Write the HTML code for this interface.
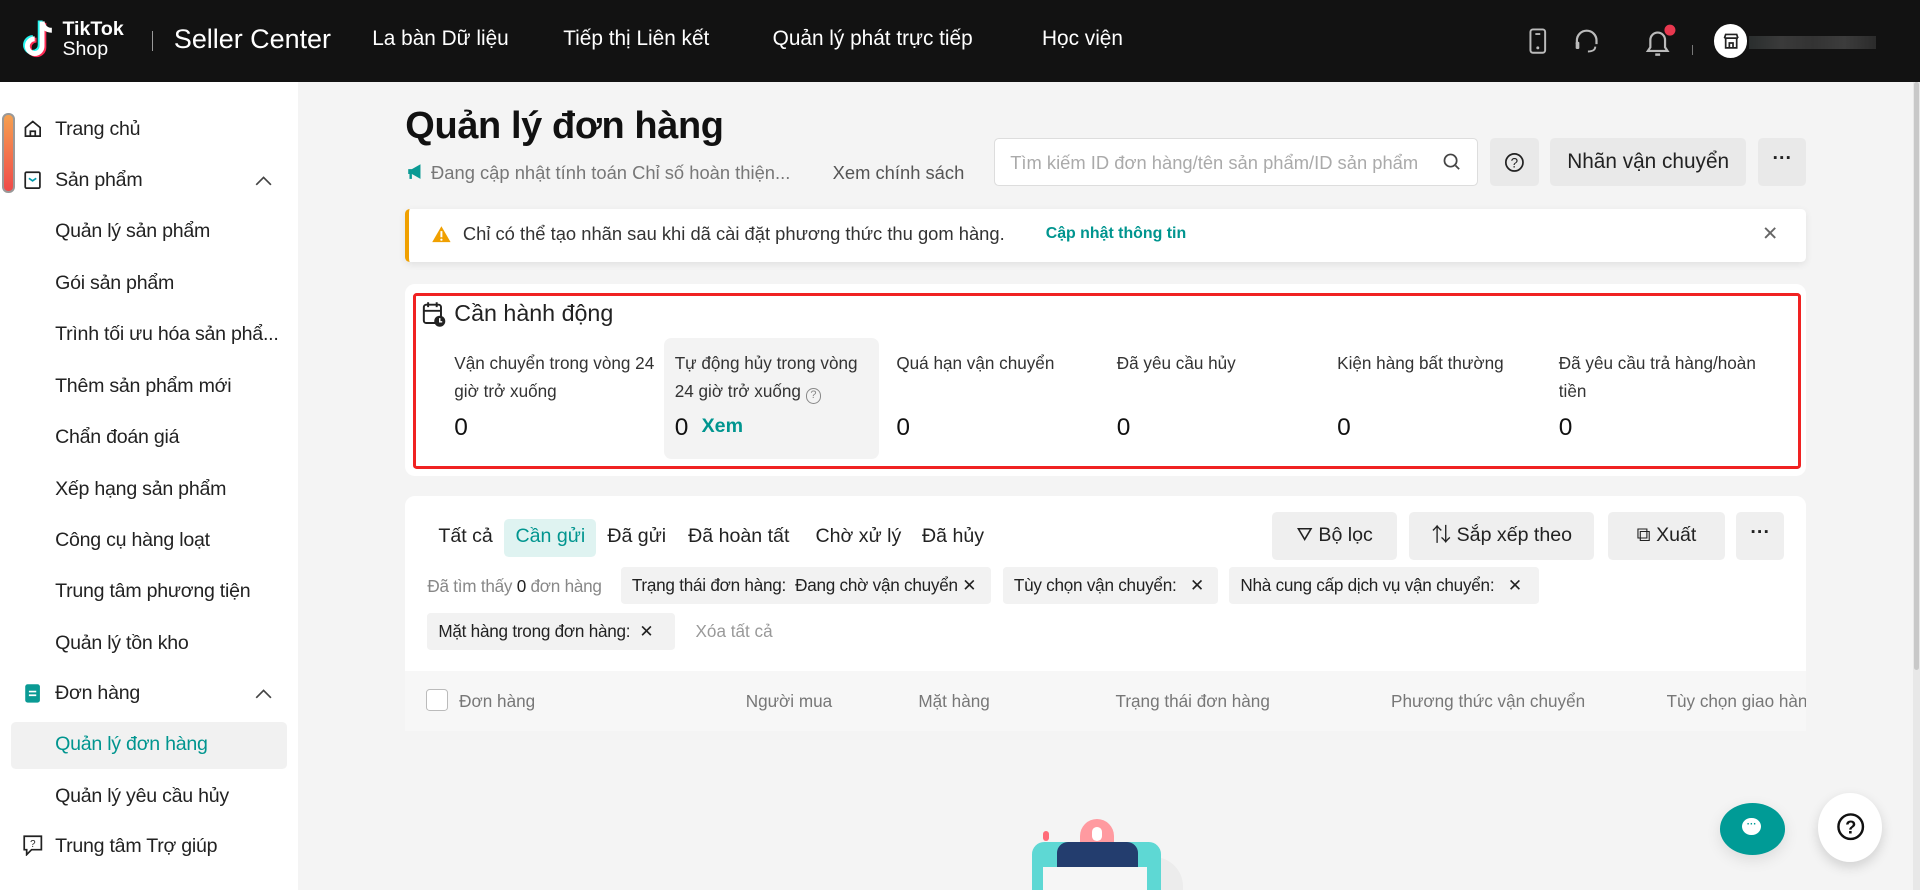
<!DOCTYPE html>
<html><head><meta charset="utf-8">
<style>
html,body{margin:0;padding:0;width:1920px;height:890px;overflow:hidden;background:#f4f4f4}
#w{zoom:1.22449;width:1568px;height:727px;position:relative;font-family:"Liberation Sans","Noto Sans CJK SC",sans-serif;color:#222;overflow:hidden;background:#f4f4f4}
.a{position:absolute;white-space:nowrap}
.hd{position:absolute;left:0;top:0;width:1568px;height:67px;background:#121212}
.nav{color:#fff;font-size:17px;top:22px}
.sb{position:absolute;left:0;top:67px;width:243px;height:660px;background:#fff}
.si{font-size:16px;color:#222;letter-spacing:-0.2px}
.btn{position:absolute;background:#e9e9e9;border-radius:4px;font-size:16px;color:#222;text-align:center;white-space:nowrap}
.card{position:absolute;background:#fff;border-radius:8px}
.lbl{font-size:14px;line-height:23px;color:#333;white-space:normal;width:170px}
.num{font-size:20px;color:#111}
.chip{position:absolute;white-space:nowrap;background:#f2f2f2;border-radius:3px;height:30px;line-height:30px;font-size:14px;color:#222;padding:0 9px;box-sizing:border-box;letter-spacing:-0.2px;overflow:hidden}
.th{font-size:14px;color:#777;top:564px}
.tab{font-size:16px;top:429px}
</style></head><body><div id="w">
<div class="hd"></div>
<svg class="a" style="left:16px;top:15px" width="34" height="36" viewBox="0 0 34 36">
<path d="M18 3v20a6 6 0 1 1-6-6" fill="none" stroke="#25f4ee" stroke-width="4" transform="translate(-1.5,-1)"/>
<path d="M18 3v20a6 6 0 1 1-6-6" fill="none" stroke="#fe2c55" stroke-width="4" transform="translate(1.5,1)"/>
<path d="M18 3v20a6 6 0 1 1-6-6M18 3c1 5 4 7 8 7" fill="none" stroke="#fff" stroke-width="4"/>
</svg>
<div class="a" style="left:51px;top:16px;color:#fff;font-size:16px;font-weight:bold;line-height:16px">TikTok</div>
<div class="a" style="left:51px;top:33px;color:#fff;font-size:16px;line-height:16px">Shop</div>
<div class="a" style="left:124px;top:25px;width:1px;height:17px;background:#999"></div>
<div class="a" style="left:142px;top:20px;color:#fff;font-size:22px">Seller Center</div>
<div class="a nav" style="left:304px">La bàn Dữ liệu</div>
<div class="a nav" style="left:460px">Tiếp thị Liên kết</div>
<div class="a nav" style="left:631px">Quản lý phát trực tiếp</div>
<div class="a nav" style="left:851px">Học viện</div>
<svg class="a" style="left:1248px;top:22px" width="16" height="24"><rect x="2" y="2" width="12" height="19" rx="2" fill="none" stroke="#bbb" stroke-width="1.6"/><rect x="6" y="5" width="4" height="1.5" fill="#bbb"/><circle cx="8" cy="17" r="1.2" fill="#bbb"/></svg>
<svg class="a" style="left:1284px;top:22px" width="24" height="24"><path d="M4 14v-3a8 8 0 0 1 16 0v3" fill="none" stroke="#bbb" stroke-width="1.8"/><rect x="3" y="12" width="3" height="6" rx="1" fill="#bbb"/><path d="M19 16c0 3-3 4-6 4" fill="none" stroke="#bbb" stroke-width="1.6"/></svg>
<svg class="a" style="left:1342px;top:20px" width="30" height="28"><path d="M4 22h16l-2-3v-6a6 6 0 0 0-12 0v6z" fill="none" stroke="#bbb" stroke-width="1.8"/><path d="M10 25h4" stroke="#bbb" stroke-width="2"/><circle cx="22" cy="5" r="4.5" fill="#e8384f"/></svg>
<div class="a" style="left:1382px;top:37px;width:1px;height:8px;background:#777"></div>
<div class="a" style="left:1400px;top:20px;width:27px;height:27px;border-radius:50%;background:#fff"></div>
<svg class="a" style="left:1406px;top:26px" width="15" height="15"><path d="M2 5h11M3 5v8h9V5M2 5l1-3h9l1 3M6 13V9h3v4" fill="none" stroke="#222" stroke-width="1.4"/></svg>
<div class="a" style="left:1428px;top:29px;width:104px;height:11px;background:linear-gradient(90deg,#2a2e2e,#3a3a3a,#333,#3c3c3c,#2b2b2b)"></div>
<div class="sb"></div>
<div class="a" style="left:2px;top:92px;width:7px;height:62px;border:2px solid #999;border-radius:5px;background:linear-gradient(#f5a050,#f04a4a)"></div>
<svg class="a" style="left:19px;top:97px" width="16" height="16"><path d="M2 7l6-5 6 5v7H2z M6 14v-4h4v4" fill="none" stroke="#222" stroke-width="1.4"/></svg>
<div class="a si" style="left:45px;top:96px">Trang chủ</div>
<svg class="a" style="left:20px;top:140px" width="14" height="15"><rect x="1" y="1" width="12" height="13" rx="1" fill="none" stroke="#222" stroke-width="1.4"/><path d="M4 6l3 2 3-2" fill="none" stroke="#09a" stroke-width="1.4"/></svg>
<div class="a si" style="left:45px;top:138px">Sản phẩm</div>
<svg class="a" style="left:208px;top:143px" width="14" height="9"><path d="M1 8l6-6 6 6" fill="none" stroke="#444" stroke-width="1.4"/></svg>
<div class="a si" style="left:45px;top:180px">Quản lý sản phẩm</div>
<div class="a si" style="left:45px;top:222px">Gói sản phẩm</div>
<div class="a si" style="left:45px;top:264px">Trình tối ưu hóa sản phẩ...</div>
<div class="a si" style="left:45px;top:306px">Thêm sản phẩm mới</div>
<div class="a si" style="left:45px;top:348px">Chẩn đoán giá</div>
<div class="a si" style="left:45px;top:390px">Xếp hạng sản phẩm</div>
<div class="a si" style="left:45px;top:432px">Công cụ hàng loạt</div>
<div class="a si" style="left:45px;top:474px">Trung tâm phương tiện</div>
<div class="a si" style="left:45px;top:516px">Quản lý tồn kho</div>
<svg class="a" style="left:20px;top:558px" width="14" height="17"><rect x="1" y="1" width="12" height="15" rx="2" fill="#0a9a94"/><path d="M4 7h6M4 10h6" stroke="#fff" stroke-width="1.4"/></svg>
<div class="a si" style="left:45px;top:557px">Đơn hàng</div>
<svg class="a" style="left:208px;top:562px" width="14" height="9"><path d="M1 8l6-6 6 6" fill="none" stroke="#444" stroke-width="1.4"/></svg>
<div class="a" style="left:9px;top:590px;width:225px;height:38px;background:#f1f1f1;border-radius:4px"></div>
<div class="a si" style="left:45px;top:599px;color:#00958f">Quản lý đơn hàng</div>
<div class="a si" style="left:45px;top:641px">Quản lý yêu cầu hủy</div>
<svg class="a" style="left:19px;top:682px" width="16" height="17"><path d="M1 1h14v11H7l-4 4v-4H1z" fill="none" stroke="#222" stroke-width="1.4"/><text x="8" y="10" font-size="8" text-anchor="middle" fill="#222" font-family="Liberation Sans">?</text></svg>
<div class="a si" style="left:45px;top:682px">Trung tâm Trợ giúp</div>
<div class="a" style="left:1562px;top:67px;width:6px;height:660px;background:#e8e8e8"></div>
<div class="a" style="left:1563px;top:67px;width:4px;height:480px;background:#c8c8c8;border-radius:2px"></div>
<div class="a" style="left:331px;top:86px;font-size:31px;font-weight:bold;color:#111;letter-spacing:-0.3px">Quản lý đơn hàng</div>
<svg class="a" style="left:332px;top:133px" width="15" height="14"><path d="M1 5h3l7-4v12l-7-4H1z" fill="#0a9a94"/><rect x="2" y="9" width="2" height="4" fill="#0a9a94"/></svg>
<div class="a" style="left:352px;top:132px;font-size:15px;color:#777">Đang cập nhật tính toán Chỉ số hoàn thiện...</div>
<div class="a" style="left:680px;top:132px;font-size:15px;color:#555">Xem chính sách</div>
<div class="a" style="left:812px;top:113px;width:395px;height:39px;background:#fff;border:1px solid #ddd;border-radius:4px;box-sizing:border-box"></div>
<div class="a" style="left:825px;top:124px;font-size:15px;color:#aaa;width:345px;overflow:hidden">Tìm kiếm ID đơn hàng/tên sản phẩm/ID sản phẩm</div>
<svg class="a" style="left:1178px;top:124px" width="16" height="16"><circle cx="7" cy="7" r="5" fill="none" stroke="#444" stroke-width="1.4"/><path d="M11 11l3 3" stroke="#444" stroke-width="1.4"/></svg>
<div class="btn" style="left:1217px;top:113px;width:40px;height:39px"></div>
<svg class="a" style="left:1228px;top:124px" width="17" height="17"><circle cx="8.5" cy="8.5" r="7" fill="none" stroke="#222" stroke-width="1.4"/><text x="8.5" y="12.5" font-size="11" text-anchor="middle" fill="#222" font-family="Liberation Sans">?</text></svg>
<div class="btn" style="left:1266px;top:113px;width:160px;height:39px;line-height:39px;font-size:17px">Nhãn vận chuyển</div>
<div class="btn" style="left:1436px;top:113px;width:39px;height:39px;line-height:33px;font-weight:bold">···</div>
<div class="card" style="left:331px;top:171px;width:1144px;height:43px;border-radius:4px;border-left:4px solid #f0a000;box-shadow:0 2px 6px rgba(0,0,0,.08);box-sizing:border-box"></div>
<svg class="a" style="left:352px;top:184px" width="17" height="15"><path d="M8.5 1L16 14H1z" fill="#f0a000"/><path d="M8.5 5v5" stroke="#fff" stroke-width="1.6"/><circle cx="8.5" cy="12" r=".9" fill="#fff"/></svg>
<div class="a" style="left:378px;top:182px;font-size:15px;color:#333">Chỉ có thể tạo nhãn sau khi dã cài đặt phương thức thu gom hàng.</div>
<div class="a" style="left:854px;top:184px;font-size:13px;color:#00958f;font-weight:bold">Cập nhật thông tin</div>
<div class="a" style="left:1439px;top:181px;font-size:16px;color:#666">✕</div>
<div class="card" style="left:331px;top:232px;width:1144px;height:157px"></div>
<div class="a" style="left:337px;top:239px;width:1134px;height:144px;border:3px solid #f02222;border-radius:3px;box-sizing:border-box"></div>
<svg class="a" style="left:345px;top:246px" width="20" height="22"><rect x="1.5" y="3" width="14" height="15" rx="2" fill="none" stroke="#222" stroke-width="1.6"/><path d="M1.5 8h14M5 1v4M12 1v4" stroke="#222" stroke-width="1.6"/><circle cx="14.5" cy="16.5" r="4.5" fill="#222"/><path d="M14.5 14v3h2" stroke="#fff" stroke-width="1.2" fill="none"/></svg>
<div class="a" style="left:371px;top:245px;font-size:19px;color:#222">Cần hành động</div>
<div class="a" style="left:542px;top:276px;width:176px;height:99px;background:#f3f3f3;border-radius:6px"></div>
<div class="a lbl" style="left:371px;top:285px">Vận chuyển trong vòng 24 giờ trở xuống</div>
<div class="a lbl" style="left:551px;top:285px;width:158px">Tự động hủy trong vòng 24 giờ trở xuống <span style="display:inline-block;width:11px;height:11px;border:1px solid #888;border-radius:50%;font-size:9px;line-height:11px;text-align:center;color:#888;vertical-align:-1px">?</span></div>
<div class="a lbl" style="left:732px;top:285px">Quá hạn vận chuyển</div>
<div class="a lbl" style="left:912px;top:285px">Đã yêu cầu hủy</div>
<div class="a lbl" style="left:1092px;top:285px">Kiện hàng bất thường</div>
<div class="a lbl" style="left:1273px;top:285px">Đã yêu cầu trả hàng/hoàn tiền</div>
<div class="a num" style="left:371px;top:338px">0</div>
<div class="a num" style="left:551px;top:338px">0</div>
<div class="a" style="left:573px;top:339px;font-size:16px;color:#00958f;font-weight:bold">Xem</div>
<div class="a num" style="left:732px;top:338px">0</div>
<div class="a num" style="left:912px;top:338px">0</div>
<div class="a num" style="left:1092px;top:338px">0</div>
<div class="a num" style="left:1273px;top:338px">0</div>
<div class="card" style="left:331px;top:405px;width:1144px;height:192px"></div>
<div class="a" style="left:331px;top:548px;width:1144px;height:49px;background:#f7f7f7"></div>
<div class="a tab" style="left:358px">Tất cả</div>
<div class="a" style="left:412px;top:424px;width:75px;height:31px;background:#dff3f1;border-radius:4px"></div>
<div class="a tab" style="left:421px;color:#00958f">Cần gửi</div>
<div class="a tab" style="left:496px">Đã gửi</div>
<div class="a tab" style="left:562px">Đã hoàn tất</div>
<div class="a tab" style="left:666px">Chờ xử lý</div>
<div class="a tab" style="left:753px">Đã hủy</div>
<div class="btn" style="left:1039px;top:418px;width:102px;height:39px;line-height:39px;background:#efefef">⛛ Bộ lọc</div>
<div class="btn" style="left:1151px;top:418px;width:151px;height:39px;line-height:39px;background:#efefef">⇅ Sắp xếp theo</div>
<div class="btn" style="left:1313px;top:418px;width:96px;height:39px;line-height:39px;background:#efefef">⧉ Xuất</div>
<div class="btn" style="left:1418px;top:418px;width:39px;height:39px;line-height:33px;background:#efefef;font-weight:bold">···</div>
<div class="a" style="left:349px;top:470px;font-size:14px;color:#888;letter-spacing:-0.2px">Đã tìm thấy <b style="color:#222;font-weight:normal">0</b> đơn hàng</div>
<div class="chip" style="left:507px;top:463px;width:302px">Trạng thái đơn hàng:&nbsp; Đang chờ vận chuyển ✕</div>
<div class="chip" style="left:819px;top:463px;width:176px">Tùy chọn vận chuyển: &nbsp;&nbsp;✕</div>
<div class="chip" style="left:1004px;top:463px;width:253px">Nhà cung cấp dịch vụ vận chuyển: &nbsp;&nbsp;✕</div>
<div class="chip" style="left:349px;top:501px;width:202px">Mặt hàng trong đơn hàng: &nbsp;✕</div>
<div class="a" style="left:568px;top:507px;font-size:14px;color:#999">Xóa tất cả</div>
<div class="a" style="left:348px;top:563px;width:16px;height:16px;border:1px solid #bbb;border-radius:3px;background:#fff"></div>
<div class="a th" style="left:375px">Đơn hàng</div>
<div class="a th" style="left:609px">Người mua</div>
<div class="a th" style="left:750px">Mặt hàng</div>
<div class="a th" style="left:911px">Trạng thái đơn hàng</div>
<div class="a th" style="left:1136px">Phương thức vận chuyển</div>
<div class="a th" style="left:1361px;width:114px;overflow:hidden">Tùy chọn giao hàng</div>
<div class="a" style="left:918px;top:700px;width:48px;height:60px;border-radius:24px;background:#ececec"></div>
<div class="a" style="left:882px;top:669px;width:28px;height:30px;border-radius:14px 14px 0 0;background:#ff9aa0"></div>
<div class="a" style="left:892px;top:675px;width:8px;height:12px;border-radius:4px;background:#fff"></div>
<div class="a" style="left:852px;top:679px;width:5px;height:8px;border-radius:3px;background:#ff6b78"></div>
<div class="a" style="left:843px;top:688px;width:105px;height:50px;border-radius:10px 10px 0 0;background:#5ed8d4"></div>
<div class="a" style="left:863px;top:688px;width:66px;height:20px;border-radius:9px 9px 0 0;background:#233d6e"></div>
<div class="a" style="left:852px;top:708px;width:85px;height:30px;background:#f6f6f6"></div>
<div class="a" style="left:1405px;top:656px;width:53px;height:42px;border-radius:50%;background:#009b96;box-shadow:0 4px 12px rgba(0,0,0,.1)"></div>
<div class="a" style="left:1423px;top:668px;width:15px;height:14px;border-radius:50%;background:#fff;color:#009b96;font-size:8px;line-height:11px;text-align:center;font-weight:bold">···</div>
<div class="a" style="left:1485px;top:648px;width:52px;height:56px;border-radius:50%;background:#fff;box-shadow:0 4px 10px rgba(0,0,0,.15)"></div>
<svg class="a" style="left:1499px;top:663px" width="24" height="24"><circle cx="12" cy="12" r="10" fill="none" stroke="#111" stroke-width="2"/><text x="12" y="17.5" font-size="15" font-weight="bold" text-anchor="middle" fill="#111" font-family="Liberation Sans">?</text></svg>
</div></body></html>
